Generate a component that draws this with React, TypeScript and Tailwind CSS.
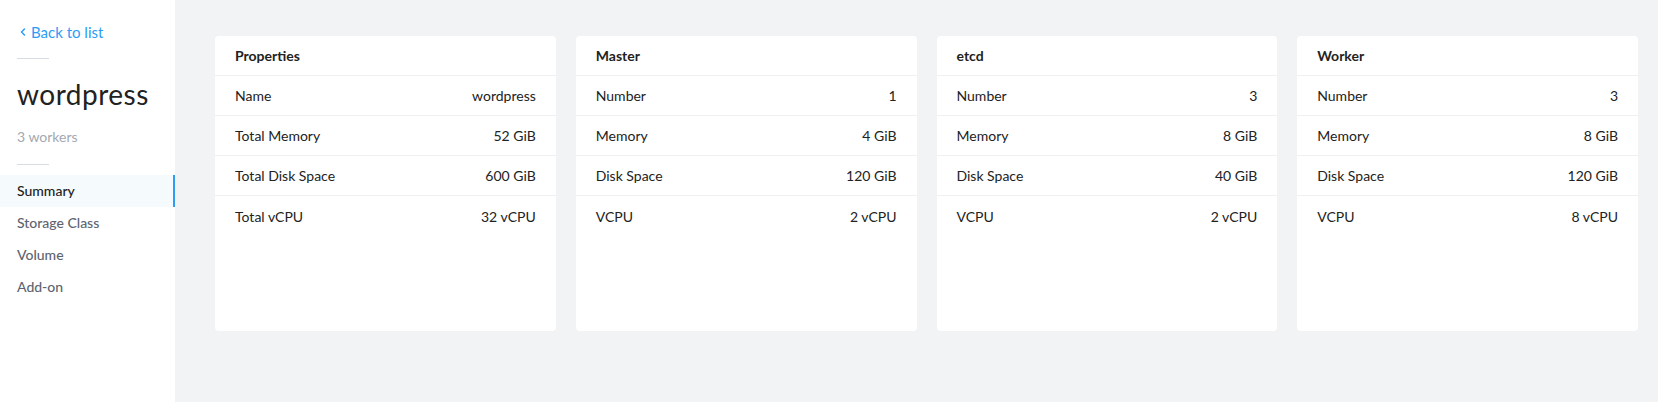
import { ChevronLeft } from "lucide-react";

type Card = { title: string; rows: [string, string][] };

const cards: Card[] = [
  {
    title: "Properties",
    rows: [
      ["Name", "wordpress"],
      ["Total Memory", "52 GiB"],
      ["Total Disk Space", "600 GiB"],
      ["Total vCPU", "32 vCPU"],
    ],
  },
  {
    title: "Master",
    rows: [
      ["Number", "1"],
      ["Memory", "4 GiB"],
      ["Disk Space", "120 GiB"],
      ["VCPU", "2 vCPU"],
    ],
  },
  {
    title: "etcd",
    rows: [
      ["Number", "3"],
      ["Memory", "8 GiB"],
      ["Disk Space", "40 GiB"],
      ["VCPU", "2 vCPU"],
    ],
  },
  {
    title: "Worker",
    rows: [
      ["Number", "3"],
      ["Memory", "8 GiB"],
      ["Disk Space", "120 GiB"],
      ["VCPU", "8 vCPU"],
    ],
  },
];

const nav = ["Summary", "Storage Class", "Volume", "Add-on"];

function InfoCard({ card }: { card: Card }) {
  return (
    <div className="h-[295px] rounded bg-white">
      <div className="flex h-10 items-center border-b border-[#eef0f2] px-5 text-[14px] font-bold text-[#222]">
        {card.title}
      </div>
      {card.rows.map(([k, v], i) => (
        <div
          key={k}
          className={`flex h-10 items-center justify-between px-5 text-[14px] text-[#222] ${
            i < card.rows.length - 1 ? "border-b border-[#eef0f2]" : ""
          }`}
        >
          <span>{k}</span>
          <span>{v}</span>
        </div>
      ))}
    </div>
  );
}

export default function App() {
  return (
    <div className="flex h-[402px] w-[1658px] font-['Lato','Open_Sans',sans-serif]">
      <aside className="flex w-[175px] shrink-0 flex-col bg-white">
        <a href="#" className="mt-[21px] flex items-center px-[17px] text-[15px] text-[#2d9cf5]">
          <ChevronLeft size={12} strokeWidth={3} className="mr-[2px]" />
          Back to list
        </a>
        <div className="mx-[17px] mt-[14px] h-px w-8 bg-[#d8dde4]" />
        <h1 className="mt-[17px] px-[17px] text-[28px] leading-9 font-normal tracking-[0.5px] text-[#222]">
          wordpress
        </h1>
        <div className="mt-[14px] px-[17px] text-[14px] text-[#a3a8b0]">3 workers</div>
        <div className="mx-[17px] mt-[17px] h-px w-8 bg-[#d8dde4]" />
        <nav className="mt-[10px] flex flex-col">
          {nav.map((n, i) => (
            <a
              key={n}
              href="#"
              className={
                i === 0
                  ? "flex h-8 items-center border-r-2 border-[#2d9cf5] bg-[#f5fafd] px-[17px] text-[14px] font-medium text-[#222]"
                  : "flex h-8 items-center px-[17px] text-[14px] font-medium text-[#5d6470]"
              }
            >
              {n}
            </a>
          ))}
        </nav>
      </aside>
      <main className="flex-1 bg-[#f2f3f5] pt-9 pr-5 pl-10">
        <div className="grid grid-cols-4 gap-5">
          {cards.map((c) => (
            <InfoCard key={c.title} card={c} />
          ))}
        </div>
      </main>
    </div>
  );
}
